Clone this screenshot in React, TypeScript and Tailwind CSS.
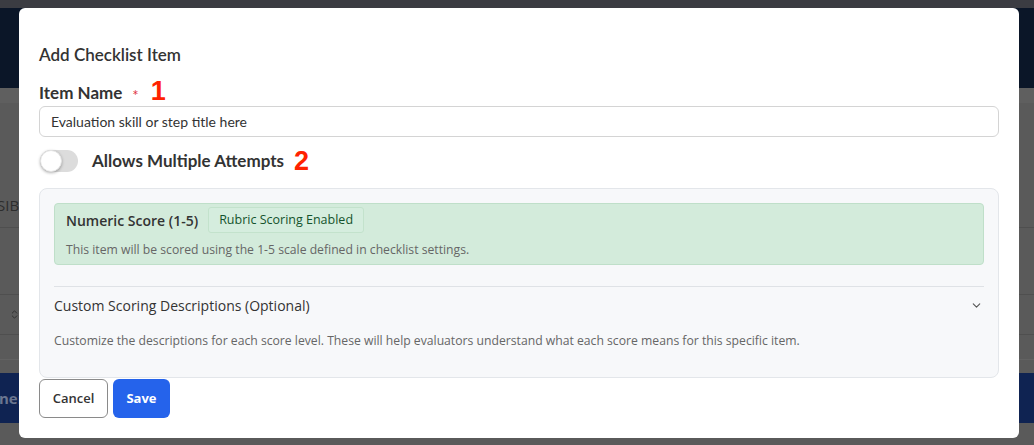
import { ChevronDown, ChevronsUpDown } from "lucide-react";

const lato = { fontFamily: "Lato, 'Open Sans', sans-serif" };

export default function App() {
  return (
    <div className="relative h-[445px] w-[1034px] overflow-hidden bg-[#5a5a5a] font-['Open_Sans',sans-serif]">
      {/* dimmed page behind the modal */}
      <div className="flex h-full flex-col">
        <div className="h-[8px] bg-[#3b3c42]" />
        <div className="h-[80px] bg-[#0b1628]" />
        <div className="h-[15px] bg-[#5f5f5f]" />
        <div className="flex h-[125px] items-end border-b border-[#4f4f4f] pb-[11px]">
          <span className="-ml-[3px] text-[15px] text-[#2d2d2d]">SIB</span>
        </div>
        <div className="h-[67px] border-b border-[#4f4f4f]" />
        <div className="flex h-[40px] items-center border-b border-[#4f4f4f] pl-[9px] text-[#2d2d2d]">
          <ChevronsUpDown size={11} strokeWidth={2} />
        </div>
        <div className="h-[25px] border-b border-[#626262]" />
        <div className="h-[13px]" />
        <div className="flex h-[50px] items-center bg-[#0f2352] text-[15px] font-bold text-[#6b7690]">
          <span className="-ml-[1px]">ner</span>
        </div>
        <div className="flex-1 bg-[#5a5a5a]" />
      </div>

      {/* modal */}
      <div className="absolute left-[19px] top-[8px] flex h-[430px] w-[1000px] flex-col rounded-[6px] bg-white px-[20px] pt-[35px]">
        <h2 style={lato} className="h-[24px] text-[17px] font-semibold leading-[24px] text-[#333]">
          Add Checklist Item
        </h2>

        <div style={lato} className="mt-[14px] flex h-[24px] items-center text-[#333]">
          <span className="text-[17px] font-bold">Item Name</span>
          <span className="ml-[10px] mt-[4px] text-[15px] text-[#e0343f]">*</span>
          <span className="-mt-[3px] ml-[12px] font-['Liberation_Sans',Arial,sans-serif] text-[27px] font-bold leading-none text-[#ff2200]">
            1
          </span>
        </div>

        <input
          readOnly
          value="Evaluation skill or step title here"
          style={lato}
          className="mt-[1px] h-[31px] w-full rounded-[6px] border border-[#d4d4d4] px-[11px] text-[14px] text-[#333] outline-none"
        />

        <div className="mt-[11px] flex h-[26px] items-center">
          <div className="relative ml-[1px] h-[22px] w-[38px] rounded-full bg-[#dcdcdc]">
            <div className="absolute left-0 top-0 h-[22px] w-[22px] rounded-full border border-[#e4e4e4] bg-white shadow-[0_1px_3px_rgba(0,0,0,0.3)]" />
          </div>
          <span style={lato} className="ml-[14px] text-[17px] font-bold text-[#333]">
            Allows Multiple Attempts
          </span>
          <span className="ml-[10px] font-['Liberation_Sans',Arial,sans-serif] text-[27px] font-bold leading-none text-[#ff2200]">
            2
          </span>
        </div>

        <div className="mt-[14px] flex h-[190px] flex-col rounded-[8px] border border-[#e3e6ea] bg-[#f7f8fa] px-[14px] pt-[14px]">
          <div className="flex h-[62px] flex-col rounded-[4px] border border-[#bfdfc9] bg-[#d3ebdb] px-[11px] pt-[3px]">
            <div className="flex items-center">
              <span className="text-[14px] font-semibold text-[#333]">Numeric Score (1-5)</span>
              <span className="ml-[10px] flex h-[26px] items-center rounded-[3px] border border-[#c3e2cc] bg-[#d5edde] px-[10px] text-[12.5px] text-[#14532d]">
                Rubric Scoring Enabled
              </span>
            </div>
            <p className="mt-[9px] text-[12.2px] leading-[16px] text-[#666]">
              This item will be scored using the 1-5 scale defined in checklist settings.
            </p>
          </div>

          <div className="mt-[21px] border-t border-[#dfe2e6]" />
          <div className="flex h-[37px] items-center justify-between pr-[1px]">
            <span className="text-[14px] text-[#333]">Custom Scoring Descriptions (Optional)</span>
            <ChevronDown size={13} strokeWidth={2} className="text-[#555]" />
          </div>
          <p className="mt-[9px] text-[12.2px] leading-[16px] text-[#666]">
            Customize the descriptions for each score level. These will help evaluators understand what each score means for this specific item.
          </p>
        </div>

        <div className="mt-[1px] flex gap-[5px]">
          <button className="h-[39px] w-[69px] rounded-[6px] border border-[#8a8a8a] bg-white text-[13px] font-semibold text-[#333]">
            Cancel
          </button>
          <button className="h-[39px] w-[57px] rounded-[6px] bg-[#2563eb] text-[13px] font-bold text-white">
            Save
          </button>
        </div>
      </div>
    </div>
  );
}
